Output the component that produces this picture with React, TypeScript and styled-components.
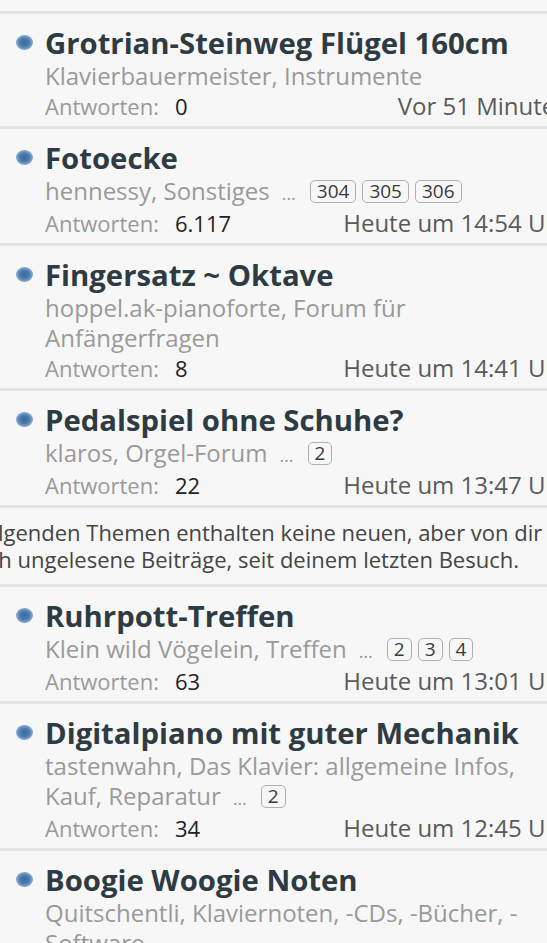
import React, { FC } from 'react'
import styled, { createGlobalStyle } from 'styled-components'

interface Topic {
	title: string
	author: string
	forum: string
	pages?: string[]
	replies: string
	last: string
}

const before: Topic[] = [
	{ title: 'Klavierstimmer gesucht', author: 'Gast', forum: 'Instrumente', replies: '3', last: 'Vor 45 Minuten' },
	{ title: 'Grotrian-Steinweg Flügel 160cm', author: 'Klavierbauermeister', forum: 'Instrumente', replies: '0', last: 'Vor 51 Minuten' },
	{ title: 'Fotoecke', author: 'hennessy', forum: 'Sonstiges', pages: ['304', '305', '306'], replies: '6.117', last: 'Heute um 14:54 Uhr' },
	{ title: 'Fingersatz ~ Oktave', author: 'hoppel.ak-pianoforte', forum: 'Forum für Anfängerfragen', replies: '8', last: 'Heute um 14:41 Uhr' },
	{ title: 'Pedalspiel ohne Schuhe?', author: 'klaros', forum: 'Orgel-Forum', pages: ['2'], replies: '22', last: 'Heute um 13:47 Uhr' },
]

const after: Topic[] = [
	{ title: 'Ruhrpott-Treffen', author: 'Klein wild Vögelein', forum: 'Treffen', pages: ['2', '3', '4'], replies: '63', last: 'Heute um 13:01 Uhr' },
	{ title: 'Digitalpiano mit guter Mechanik', author: 'tastenwahn', forum: 'Das Klavier: allgemeine Infos, Kauf, Reparatur', pages: ['2'], replies: '34', last: 'Heute um 12:45 Uhr' },
	{ title: 'Boogie Woogie Noten', author: 'Quitschentli', forum: 'Klaviernoten, -CDs, -Bücher, -Software', replies: '11', last: 'Heute um 12:30 Uhr' },
]

const TopicRow: FC<{ topic: Topic }> = ({ topic }) => (
	<Row>
		<Bullet />
		<Body>
			<Title>{topic.title}</Title>
			<Sub>
				{topic.author}, {topic.forum}
				{topic.pages && (
					<>
						<Ellipsis>…</Ellipsis>
						{topic.pages.map(p => (
							<PageBox key={p}>{p}</PageBox>
						))}
					</>
				)}
			</Sub>
			<Meta>
				<Label>Antworten:</Label>
				<Value>{topic.replies}</Value>
				<LastPost>{topic.last}</LastPost>
			</Meta>
		</Body>
	</Row>
)

const App: FC = () => (
	<>
		<GlobalStyle />
		<Page>
			{before.map(t => (
				<TopicRow key={t.title} topic={t} />
			))}
			<Notice>
				Die folgenden Themen enthalten keine neuen, aber von dir noch ungelesene Beiträge, seit deinem letzten Besuch.
			</Notice>
			{after.map(t => (
				<TopicRow key={t.title} topic={t} />
			))}
		</Page>
	</>
)

export default App

const GlobalStyle = createGlobalStyle`
	html, body {
		margin: 0;
		padding: 0;
		overflow: hidden;
		background: #f7f7f7;
	}
	body {
		font-family: 'Open Sans', 'Noto Sans', sans-serif;
	}
`

const Page = styled.div`
	width: 660px;
	margin: -101px 0 0 -80px;
	background: #f7f7f7;
`

const Row = styled.div`
	display: flex;
	align-items: flex-start;
	gap: 12px;
	padding: 11px 10px 5px 96px;
	border-bottom: 3px solid #e3e3e3;
`

const Bullet = styled.span`
	flex: none;
	width: 17px;
	height: 15px;
	margin-top: 10px;
	border-radius: 50%;
	background: radial-gradient(ellipse at center, #3a699c 0%, #4d7db0 40%, #8fb0d2 72%, rgba(196, 212, 230, 0.4) 100%);
`

const Body = styled.div`
	flex: 1;
	min-width: 0;
`

const Title = styled.div`
	font-size: 29.3px;
	font-weight: 700;
	line-height: 36px;
	color: #2e3b42;
	white-space: nowrap;
`

const Sub = styled.div`
	font-size: 24px;
	line-height: 30px;
	color: #9a9a9a;
	padding-right: 15px;
`

const Ellipsis = styled.span`
	font-size: 18px;
	margin: 0 14px 0 12px;
	color: #999;
`

const PageBox = styled.span`
	display: inline-block;
	font-size: 19px;
	line-height: 21px;
	padding: 0 6px;
	margin-right: 6px;
	color: #3a3a3a;
	border: 1.5px solid #b0b0b0;
	border-radius: 5px;
	vertical-align: 2px;
`

const Meta = styled.div`
	display: flex;
	align-items: baseline;
	font-size: 22px;
	line-height: 30px;
	white-space: nowrap;
`

const Label = styled.span`
	color: #9a9a9a;
`

const Value = styled.span`
	margin-left: 16px;
	color: #222;
`

const LastPost = styled.span`
	margin-left: auto;
	font-size: 24px;
	color: #5a5a5a;
`

const Notice = styled.p`
	margin: 0;
	padding: 11px 30px 11px 10px;
	font-size: 22px;
	line-height: 27px;
	text-align: center;
	color: #444;
	border-bottom: 3px solid #e3e3e3;
`
